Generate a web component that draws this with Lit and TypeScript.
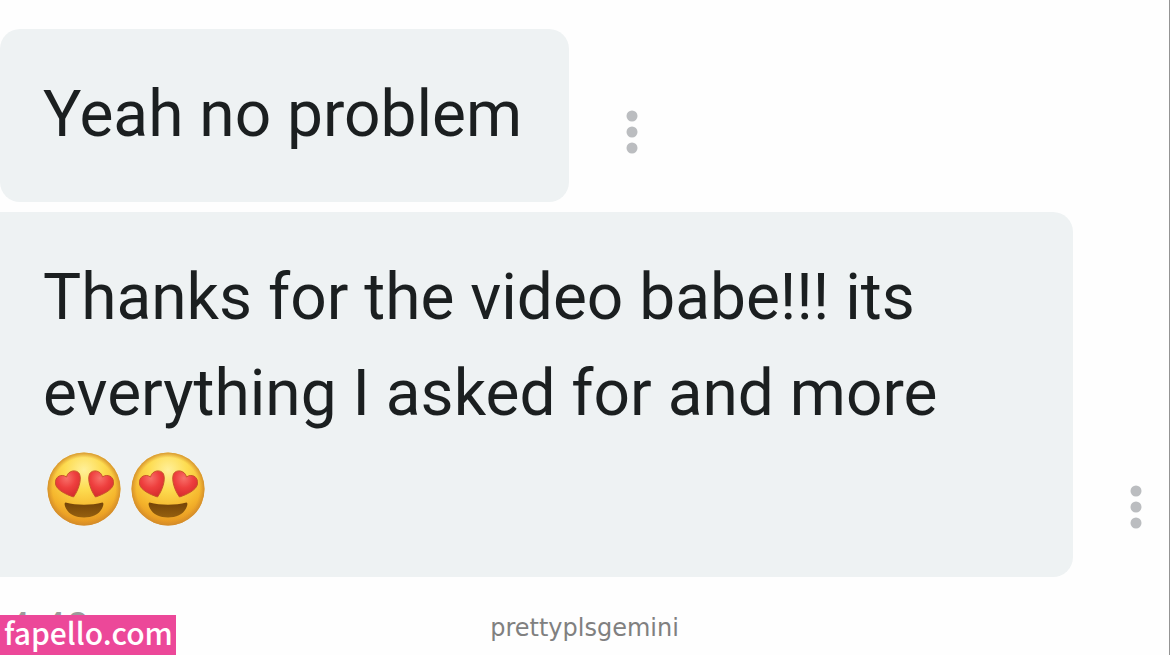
import { LitElement, html, css } from "lit";
import { customElement, property } from "lit/decorators.js";

@customElement("heart-eyes")
class HeartEyes extends LitElement {
  static styles = css`
    :host { display: block; }
    svg { display: block; width: 76px; height: 76px; }
  `;
  render() {
    return html`<svg viewBox="0 0 76 76" role="img" aria-label="Smiling face with heart eyes">
      <defs>
        <radialGradient id="face" cx="50%" cy="24%" r="76%">
          <stop offset="0" stop-color="#fff09a" />
          <stop offset=".35" stop-color="#fddc50" />
          <stop offset=".72" stop-color="#f5b52c" />
          <stop offset="1" stop-color="#e3901f" />
        </radialGradient>
        <radialGradient id="rim" cx="50%" cy="50%" r="50%">
          <stop offset=".86" stop-color="#d8922c" stop-opacity="0" />
          <stop offset="1" stop-color="#cf8a2c" stop-opacity=".85" />
        </radialGradient>
        <radialGradient id="heart" cx="45%" cy="28%" r="75%">
          <stop offset="0" stop-color="#f8706a" />
          <stop offset=".5" stop-color="#ee3f3e" />
          <stop offset="1" stop-color="#d32b2c" />
        </radialGradient>
        <linearGradient id="mouth" x1="0" y1="0" x2="0" y2="1">
          <stop offset="0" stop-color="#744408" />
          <stop offset="1" stop-color="#95600f" />
        </linearGradient>
      </defs>
      <circle cx="38" cy="38" r="36.5" fill="url(#face)" />
      <circle cx="38" cy="38" r="36.5" fill="url(#rim)" />
      <path d="M27.500 46C20 43.500 10.500 39 9.500 33C8.500 25 16 22.500 20.500 26C22 19 31 18 33.500 23C36 29 32 40 27.500 46Z" fill="url(#heart)" stroke="#c9542a" stroke-width="1" />
      <path d="M49.500 46C57 43.500 66.500 39 67.500 33C68.500 25 61 22.500 56.500 26C55 19 46 18 43.500 23C41 29 45 40 49.500 46Z" fill="url(#heart)" stroke="#c9542a" stroke-width="1" />
      <path d="M19.500 51.500C31 54.500 45 54.500 56.500 51.500C58 52 57.500 54.500 56 57.500C53 63.500 46 66.500 38 66.500C30 66.500 23 63.500 20 57.500C18.500 54.500 18 52 19.500 51.500Z" fill="url(#mouth)" />
    </svg>`;
  }
}

@customElement("chat-message")
class ChatMessage extends LitElement {
  @property() text = "";
  @property({ type: Number }) hearts = 0;

  static styles = css`
    :host { display: flex; align-items: flex-end; }
    .bubble {
      box-sizing: border-box;
      max-width: 1073px;
      padding: 38px 47px 39px 43px;
      border-radius: 20px;
      background: #eef2f3;
      color: #1b1f20;
      font: 400 64px/96px Roboto, sans-serif;
    }
    .bubble.joined { border-top-left-radius: 0; border-bottom-left-radius: 0; }
    p { margin: 0; }
    .hearts { display: flex; align-items: flex-start; gap: 8px; height: 96px; padding: 9px 0 0 3px; box-sizing: border-box; }
    .menu {
      flex: none;
      width: 48px;
      height: 48px;
      margin: 0 0 46px 39px;
      padding: 0;
      border: 0;
      background: none;
      cursor: pointer;
    }
    .menu svg { display: block; width: 48px; height: 48px; fill: #bbbdc0; }
  `;
  render() {
    return html`
      <div class="bubble ${this.hearts ? "joined" : ""}">
        <p>${this.text}</p>
        ${this.hearts
          ? html`<div class="hearts">${Array.from({ length: this.hearts }, () => html`<heart-eyes></heart-eyes>`)}</div>`
          : null}
      </div>
      <button class="menu" aria-label="Message options">
        <svg viewBox="0 0 48 48" aria-hidden="true">
          <circle cx="24" cy="8" r="5.500" /><circle cx="24" cy="24" r="5.500" /><circle cx="24" cy="40" r="5.500" />
        </svg>
      </button>`;
  }
}

@customElement("app-root")
class AppRoot extends LitElement {
  static styles = css`
    :host {
      display: block;
      position: relative;
      box-sizing: border-box;
      min-height: 100vh;
      overflow: hidden;
      border-right: 1px solid #949494;
      background: #fefefe;
    }
    .thread { display: flex; flex-direction: column; gap: 10px; padding-top: 29px; }
    .time {
      display: block;
      padding: 28px 0 0 6px;
      color: #9b9b9b;
      font: 400 44px/48px Roboto, sans-serif;
    }
    .site, .caption { position: absolute; }
    .site {
      left: 0;
      bottom: 0;
      padding: 0 3px 6px 4px;
      background: #ec4899;
      color: #fff;
      font: 500 30px/34px "Noto Sans CJK SC", sans-serif;
      text-decoration: none;
    }
    .caption {
      left: 0;
      right: 0;
      bottom: 11px;
      text-align: center;
      color: #808080;
      font: 400 24px/32px "DejaVu Sans", sans-serif;
      pointer-events: none;
    }
  `;
  render() {
    return html`
      <main class="thread">
        <chat-message text="Yeah no problem"></chat-message>
        <chat-message text="Thanks for the video babe!!! its everything I asked for and more" .hearts=${2}></chat-message>
      </main>
      <time class="time">4:49</time>
      <div class="caption">prettyplsgemini</div>
      <a class="site" href="#">fapello.com</a>`;
  }
}
